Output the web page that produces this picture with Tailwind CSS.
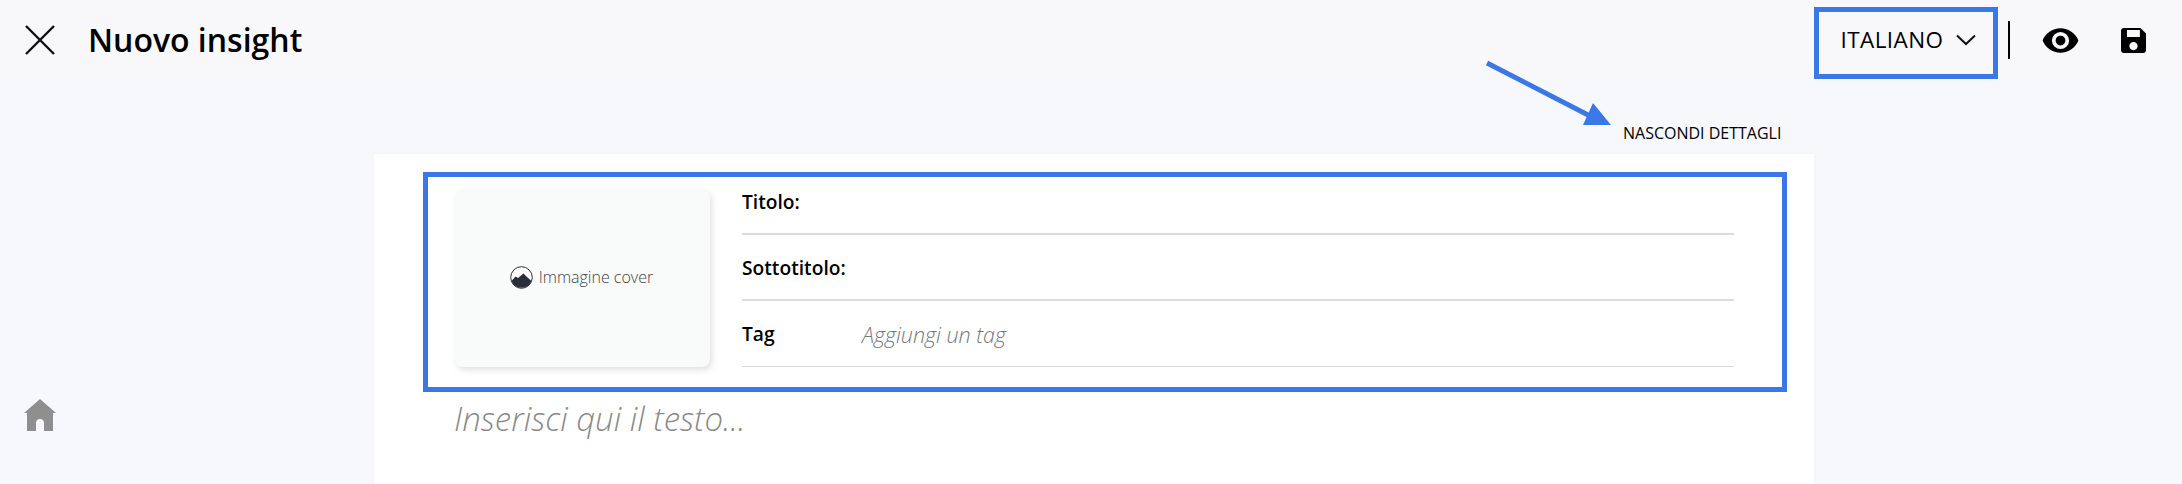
<!DOCTYPE html>
<html>
<head>
<meta charset="utf-8">
<script src="https://cdn.jsdelivr.net/npm/@tailwindcss/browser@4"></script>
</head>
<body class="m-0 h-[484px] w-[2182px] overflow-hidden bg-[#f7f8fc] font-['Open_Sans',sans-serif] text-black">
<div class="relative h-[484px] w-[2182px]">
  <header class="flex h-[80px] items-center bg-[#f8f8fb] pl-[25px] pr-[36px]">
    <svg class="h-[30px] w-[30px]" viewBox="0 0 30 30" fill="none" stroke="#111" stroke-width="2.4"><path d="M1 1L29 29M29 1L1 29"/></svg>
    <h1 class="ml-[33px] text-[32px] leading-[40px] font-semibold">Nuovo insight</h1>
    <div class="mt-[5px] ml-auto flex h-[72px] w-[184px] items-center justify-center gap-[13px] border-[5px] border-[#3b78e7] pl-[5px]">
      <span class="-mt-[5px] text-[22.5px] leading-[30px] font-medium tracking-[0.4px]">ITALIANO</span>
      <svg class="-mt-[5px] h-[12px] w-[20px]" viewBox="0 0 20 12" fill="none" stroke="#111" stroke-width="2"><path d="M1 1.5L10 10L19 1.5"/></svg>
    </div>
    <div class="ml-[10px] h-[38px] w-[2px] bg-black"></div>
    <svg class="ml-[31px] h-[39px] w-[39px]" viewBox="0 0 24 24" fill="#000"><path d="M12 4.5C7 4.5 2.73 7.61 1 12c1.73 4.39 6 7.5 11 7.5s9.27-3.11 11-7.5c-1.73-4.39-6-7.5-11-7.5zM12 17.3a5.3 5.3 0 1 1 0-10.6 5.3 5.3 0 0 1 0 10.6zm0-8.3a3 3 0 1 0 0 6 3 3 0 0 0 0-6z"/></svg>
    <svg class="ml-[41px] h-[25px] w-[25px]" viewBox="0 0 18 18" fill="#000"><path fill-rule="evenodd" d="M14 0H2C.9 0 0 .9 0 2v14c0 1.1.9 2 2 2h14c1.1 0 2-.9 2-2V4l-4-4zM9 16c-1.66 0-3-1.34-3-3s1.34-3 3-3 3 1.34 3 3-1.34 3-3 3zM13.6 6.5H4.3V1.5h9.3z"/></svg>
  </header>

  <svg class="absolute left-[1480px] top-[60px] h-[70px] w-[140px]" viewBox="0 0 140 70" fill="none"><path d="M7 3L112 57" stroke="#3b78e7" stroke-width="5"/><path d="M131 65L103 65L113 43Z" fill="#3b78e7"/></svg>
  <div class="absolute left-[1623px] top-[122px] text-[16px] leading-[22px]">NASCONDI DETTAGLI</div>

  <svg class="absolute left-[24px] top-[399px] h-[32px] w-[32px]" viewBox="0 0 32 32" fill="#8f8f8f"><path d="M16 0L32 14H29V32H20V24a4 4 0 0 0-8 0V32H3V14H0Z"/></svg>

  <main class="absolute left-[374px] top-[154px] h-[330px] w-[1440px] bg-white shadow-[0_0_3px_rgba(0,0,0,0.03)]">
    <section class="absolute left-[49px] top-[18px] flex h-[220px] w-[1364px] border-[5px] border-[#3b78e7] pl-[27px] pt-[12px]">
      <div class="flex h-[178px] w-[255px] items-center justify-center gap-[6px] rounded-[8px] bg-[#f9fafa] pr-[2px] pb-[2px] shadow-[2px_3px_6px_rgba(0,0,0,0.12)]">
        <svg class="h-[23px] w-[23px]" viewBox="0 0 23 23"><circle cx="11.5" cy="11.5" r="10.8" fill="#fff" stroke="#2a2d3a" stroke-width="1"/><path d="M1.5 15L5.5 10.5L8 12L13.5 7.5L17 11L21.5 15A10.8 10.8 0 0 1 1.5 15Z" fill="#2a2d3a"/></svg>
        <span class="text-[16px] leading-[22px] font-light text-[#444]">Immagine cover</span>
      </div>
      <div class="ml-[32px] w-[992px]">
        <div class="h-[46px] border-b-2 border-[#dcdcdc] pt-[1px] text-[19.2px] leading-[24px] font-semibold">Titolo:</div>
        <div class="flex h-[66px] items-center border-b-2 border-[#dcdcdc] pt-[2px] text-[19.2px] font-semibold">Sottotitolo:</div>
        <div class="flex h-[66px] items-center border-b border-[#dcdcdc] pt-[2px]">
          <span class="w-[120px] text-[19.2px] font-semibold">Tag</span>
          <span class="pt-[1px] text-[21.5px] font-light italic text-[#777]">Aggiungi un tag</span>
        </div>
      </div>
    </section>
    <div class="absolute left-[80px] top-[245px] text-[33px] leading-[40px] font-light italic text-[#8a8a8a]">Inserisci qui il testo...</div>
  </main>
</div>
</body>
</html>
